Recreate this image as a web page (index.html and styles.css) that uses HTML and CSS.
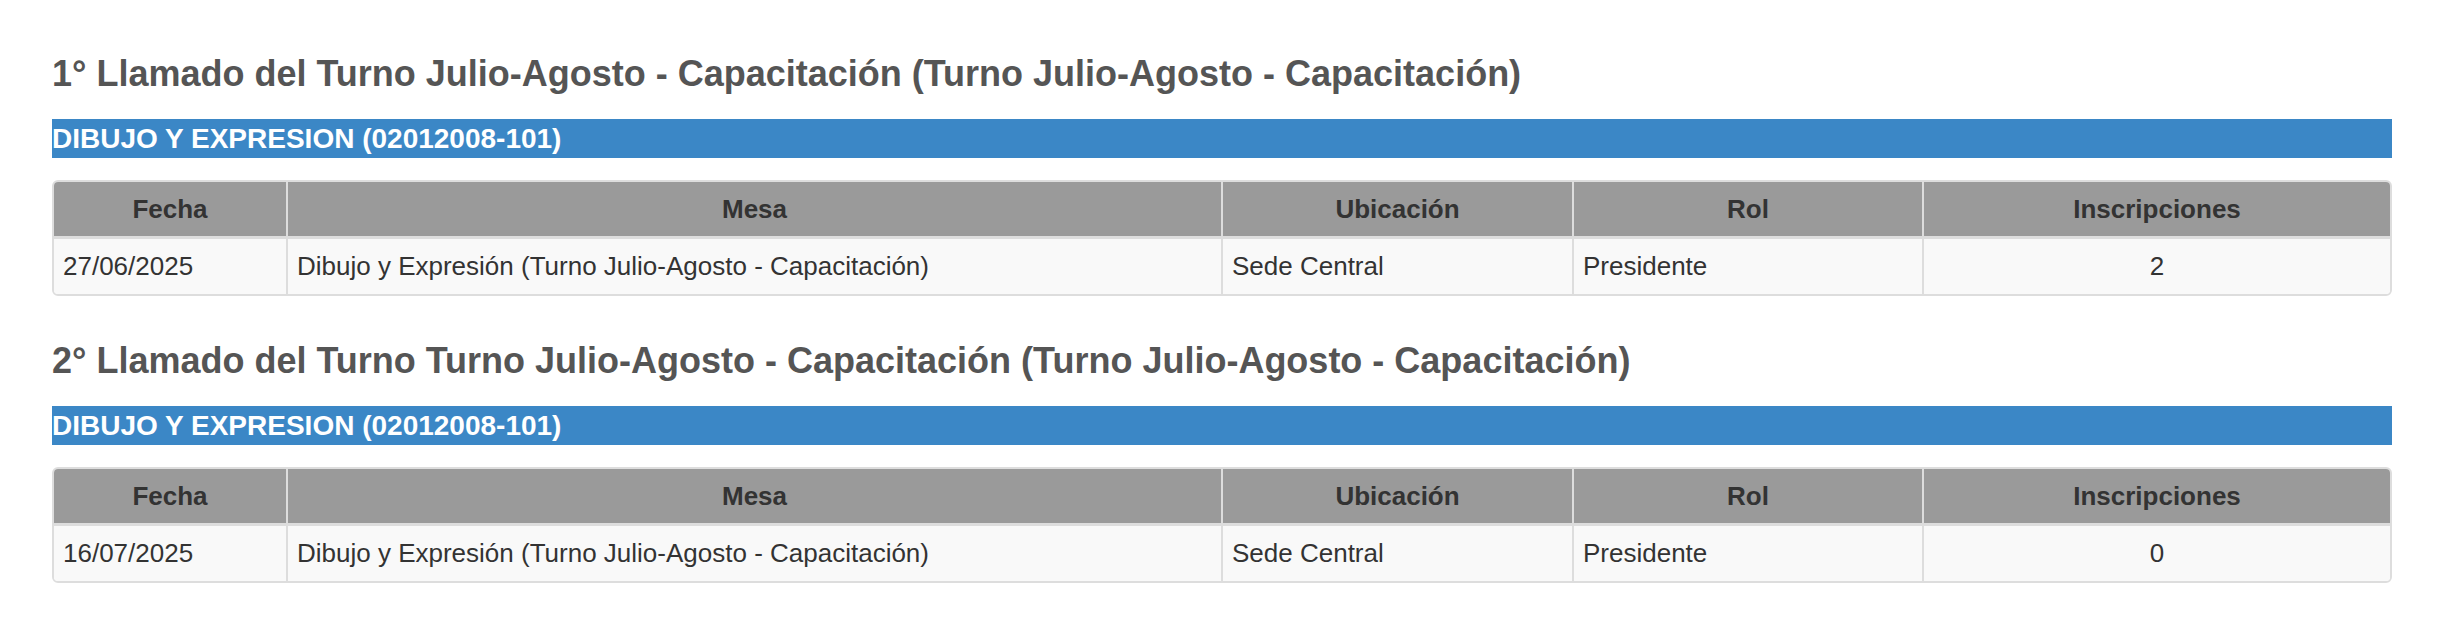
FILE: index.html
```html
<!DOCTYPE html>
<html lang="es">
<head>
<meta charset="utf-8">
<title>Llamados</title>
<link rel="stylesheet" href="styles.css">
</head>
<body>
<main class="page">
  <section class="llamado">
    <h3 class="llamado-title">1° Llamado del Turno Julio-Agosto - Capacitación (Turno Julio-Agosto - Capacitación)</h3>
    <div class="materia">DIBUJO Y EXPRESION (02012008-101)</div>
    <div class="table-wrap">
      <table class="mesas">
        <thead>
          <tr>
            <th class="col-fecha">Fecha</th>
            <th class="col-mesa">Mesa</th>
            <th class="col-ubic">Ubicación</th>
            <th class="col-rol">Rol</th>
            <th class="col-insc">Inscripciones</th>
          </tr>
        </thead>
        <tbody>
          <tr>
            <td>27/06/2025</td>
            <td>Dibujo y Expresión (Turno Julio-Agosto - Capacitación)</td>
            <td>Sede Central</td>
            <td>Presidente</td>
            <td class="num">2</td>
          </tr>
        </tbody>
      </table>
    </div>
  </section>
  <section class="llamado">
    <h3 class="llamado-title">2° Llamado del Turno Turno Julio-Agosto - Capacitación (Turno Julio-Agosto - Capacitación)</h3>
    <div class="materia">DIBUJO Y EXPRESION (02012008-101)</div>
    <div class="table-wrap">
      <table class="mesas">
        <thead>
          <tr>
            <th class="col-fecha">Fecha</th>
            <th class="col-mesa">Mesa</th>
            <th class="col-ubic">Ubicación</th>
            <th class="col-rol">Rol</th>
            <th class="col-insc">Inscripciones</th>
          </tr>
        </thead>
        <tbody>
          <tr>
            <td>16/07/2025</td>
            <td>Dibujo y Expresión (Turno Julio-Agosto - Capacitación)</td>
            <td>Sede Central</td>
            <td>Presidente</td>
            <td class="num">0</td>
          </tr>
        </tbody>
      </table>
    </div>
  </section>
</main>
</body>
</html>
```
FILE: styles.css
```css
html, body {
  margin: 0;
  padding: 0;
  background: #ffffff;
}

body {
  font-family: "Liberation Sans", Arial, sans-serif;
  color: #333333;
}

.page {
  padding: 54px 46px 0 52px;
}

.llamado {
  margin-bottom: 45px;
}

.llamado-title {
  margin: 0 0 25px;
  font-size: 36px;
  line-height: 40px;
  font-weight: 700;
  color: #555555;
}

.materia {
  margin: 0 0 22px;
  background: #3b87c6;
  color: #ffffff;
  font-size: 28px;
  line-height: 39px;
  font-weight: 700;
}

.table-wrap {
  border: 2px solid #dddddd;
  border-radius: 6px;
  overflow: hidden;
}

.mesas {
  width: 100%;
  border-collapse: separate;
  border-spacing: 0;
  table-layout: fixed;
  font-size: 26px;
}

.mesas th,
.mesas td {
  box-sizing: border-box;
  padding: 12px 9px;
}

.mesas th {
  background: #9a9a9a;
  color: #333333;
  font-weight: 700;
  text-align: center;
  line-height: 30px;
  border-bottom: 3px solid #dddddd;
}

.mesas td {
  background: #f9f9f9;
  color: #333333;
  text-align: left;
  line-height: 31px;
}

.mesas th + th,
.mesas td + td {
  border-left: 2px solid #dddddd;
}

.mesas td.num {
  text-align: center;
}

.col-fecha { width: 232px; }
.col-mesa { width: 935px; }
.col-ubic { width: 351px; }
.col-rol { width: 350px; }
.col-insc { width: 468px; }
```
